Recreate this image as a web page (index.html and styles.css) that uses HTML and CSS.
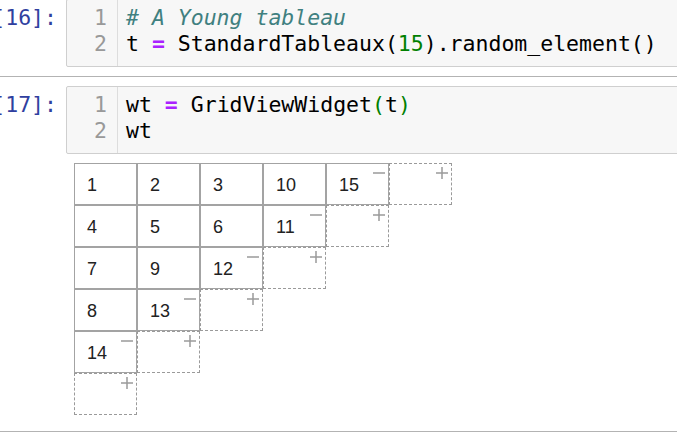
FILE: index.html
```html
<!DOCTYPE html>
<html>
<head>
<meta charset="utf-8">
<link rel="stylesheet" href="styles.css">
</head>
<body>
<div class="nb">
  <div class="cell first">
    <div class="prompt"><span>[16]:</span></div>
    <div class="input">
      <div class="gutter"><div>1</div><div>2</div></div>
      <div class="code"><div><span class="cm"># A Young tableau</span></div><div>t <span class="op">=</span> StandardTableaux(<span class="num">15</span>).random_element()</div></div>
    </div>
  </div>
  <div class="sep"></div>
  <div class="cell second">
    <div class="prompt"><span>[17]:</span></div>
    <div class="input">
      <div class="gutter"><div>1</div><div>2</div></div>
      <div class="code"><div>wt <span class="op">=</span> GridViewWidget<span class="br">(</span>t<span class="br">)</span></div><div>wt</div></div>
    </div>
  </div>
  <div class="output">
    <div class="grid">
      <div class="row">
        <div class="box">1</div>
        <div class="box">2</div>
        <div class="box">3</div>
        <div class="box">10</div>
        <div class="box">15<svg class="btn" viewBox="0 0 12 12"><line x1="0" y1="6" x2="12" y2="6"/></svg></div>
        <div class="box add"><svg class="btn" viewBox="0 0 12 12"><line x1="0" y1="6" x2="12" y2="6"/><line x1="6" y1="0" x2="6" y2="12"/></svg></div>
      </div>
      <div class="row">
        <div class="box">4</div>
        <div class="box">5</div>
        <div class="box">6</div>
        <div class="box">11<svg class="btn" viewBox="0 0 12 12"><line x1="0" y1="6" x2="12" y2="6"/></svg></div>
        <div class="box add"><svg class="btn" viewBox="0 0 12 12"><line x1="0" y1="6" x2="12" y2="6"/><line x1="6" y1="0" x2="6" y2="12"/></svg></div>
      </div>
      <div class="row">
        <div class="box">7</div>
        <div class="box">9</div>
        <div class="box">12<svg class="btn" viewBox="0 0 12 12"><line x1="0" y1="6" x2="12" y2="6"/></svg></div>
        <div class="box add"><svg class="btn" viewBox="0 0 12 12"><line x1="0" y1="6" x2="12" y2="6"/><line x1="6" y1="0" x2="6" y2="12"/></svg></div>
      </div>
      <div class="row">
        <div class="box">8</div>
        <div class="box">13<svg class="btn" viewBox="0 0 12 12"><line x1="0" y1="6" x2="12" y2="6"/></svg></div>
        <div class="box add"><svg class="btn" viewBox="0 0 12 12"><line x1="0" y1="6" x2="12" y2="6"/><line x1="6" y1="0" x2="6" y2="12"/></svg></div>
      </div>
      <div class="row">
        <div class="box">14<svg class="btn" viewBox="0 0 12 12"><line x1="0" y1="6" x2="12" y2="6"/></svg></div>
        <div class="box add"><svg class="btn" viewBox="0 0 12 12"><line x1="0" y1="6" x2="12" y2="6"/><line x1="6" y1="0" x2="6" y2="12"/></svg></div>
      </div>
      <div class="row">
        <div class="box add"><svg class="btn" viewBox="0 0 12 12"><line x1="0" y1="6" x2="12" y2="6"/><line x1="6" y1="0" x2="6" y2="12"/></svg></div>
      </div>
    </div>
  </div>
  <div class="sep"></div>
</div>
</body>
</html>
```
FILE: styles.css
```css
html, body {
  margin: 0;
  padding: 0;
  background: #fff;
  overflow: hidden;
}

.nb {
  width: 720px;
  margin-top: -1px;
}

.cell {
  display: flex;
  align-items: flex-start;
}

.cell.first {
  padding-bottom: 9px;
}

.cell.second {
  padding-top: 9px;
}

.prompt {
  width: 66px;
  flex: none;
  box-sizing: border-box;
  display: flex;
  justify-content: flex-end;
  padding: 6px 9px 0 0;
  font: 21.5px/25.5px "DejaVu Sans Mono", monospace;
  color: #303F9F;
  white-space: nowrap;
}

.input {
  flex: 1;
  display: flex;
  background: #f7f7f7;
  border: 1px solid #cfcfcf;
  border-radius: 2px;
  font: 21.5px/25.5px "DejaVu Sans Mono", monospace;
}

.gutter {
  width: 51px;
  flex: none;
  box-sizing: border-box;
  border-right: 1px solid #dddddd;
  text-align: right;
  padding: 5px 10px 10px 0;
  color: #999;
}

.code {
  padding: 5px 0 10px 8px;
  color: #000;
  white-space: pre;
}

.cm {
  color: #408080;
  font-style: italic;
}

.op {
  color: #AA22FF;
  font-weight: bold;
}

.num {
  color: #008000;
}

.br {
  color: #008000;
}

.sep {
  height: 1px;
  background: #b3b3b3;
}

.output {
  padding: 9px 0 16px 74px;
}

.grid {
  display: flex;
  flex-direction: column;
}

.row {
  display: flex;
}

.box {
  position: relative;
  width: 63px;
  height: 42px;
  box-sizing: border-box;
  border: 1px solid #a3a3a3;
  display: flex;
  align-items: center;
  padding: 3px 0 0 12px;
  font: 18px "Liberation Sans", Arial, sans-serif;
  color: #222;
}

.box.add {
  border: 1px dashed #9a9a9a;
}

.btn {
  position: absolute;
  top: 3px;
  right: 3px;
  width: 12px;
  height: 12px;
  stroke: #9a9a9a;
  stroke-width: 1.5;
}
```
